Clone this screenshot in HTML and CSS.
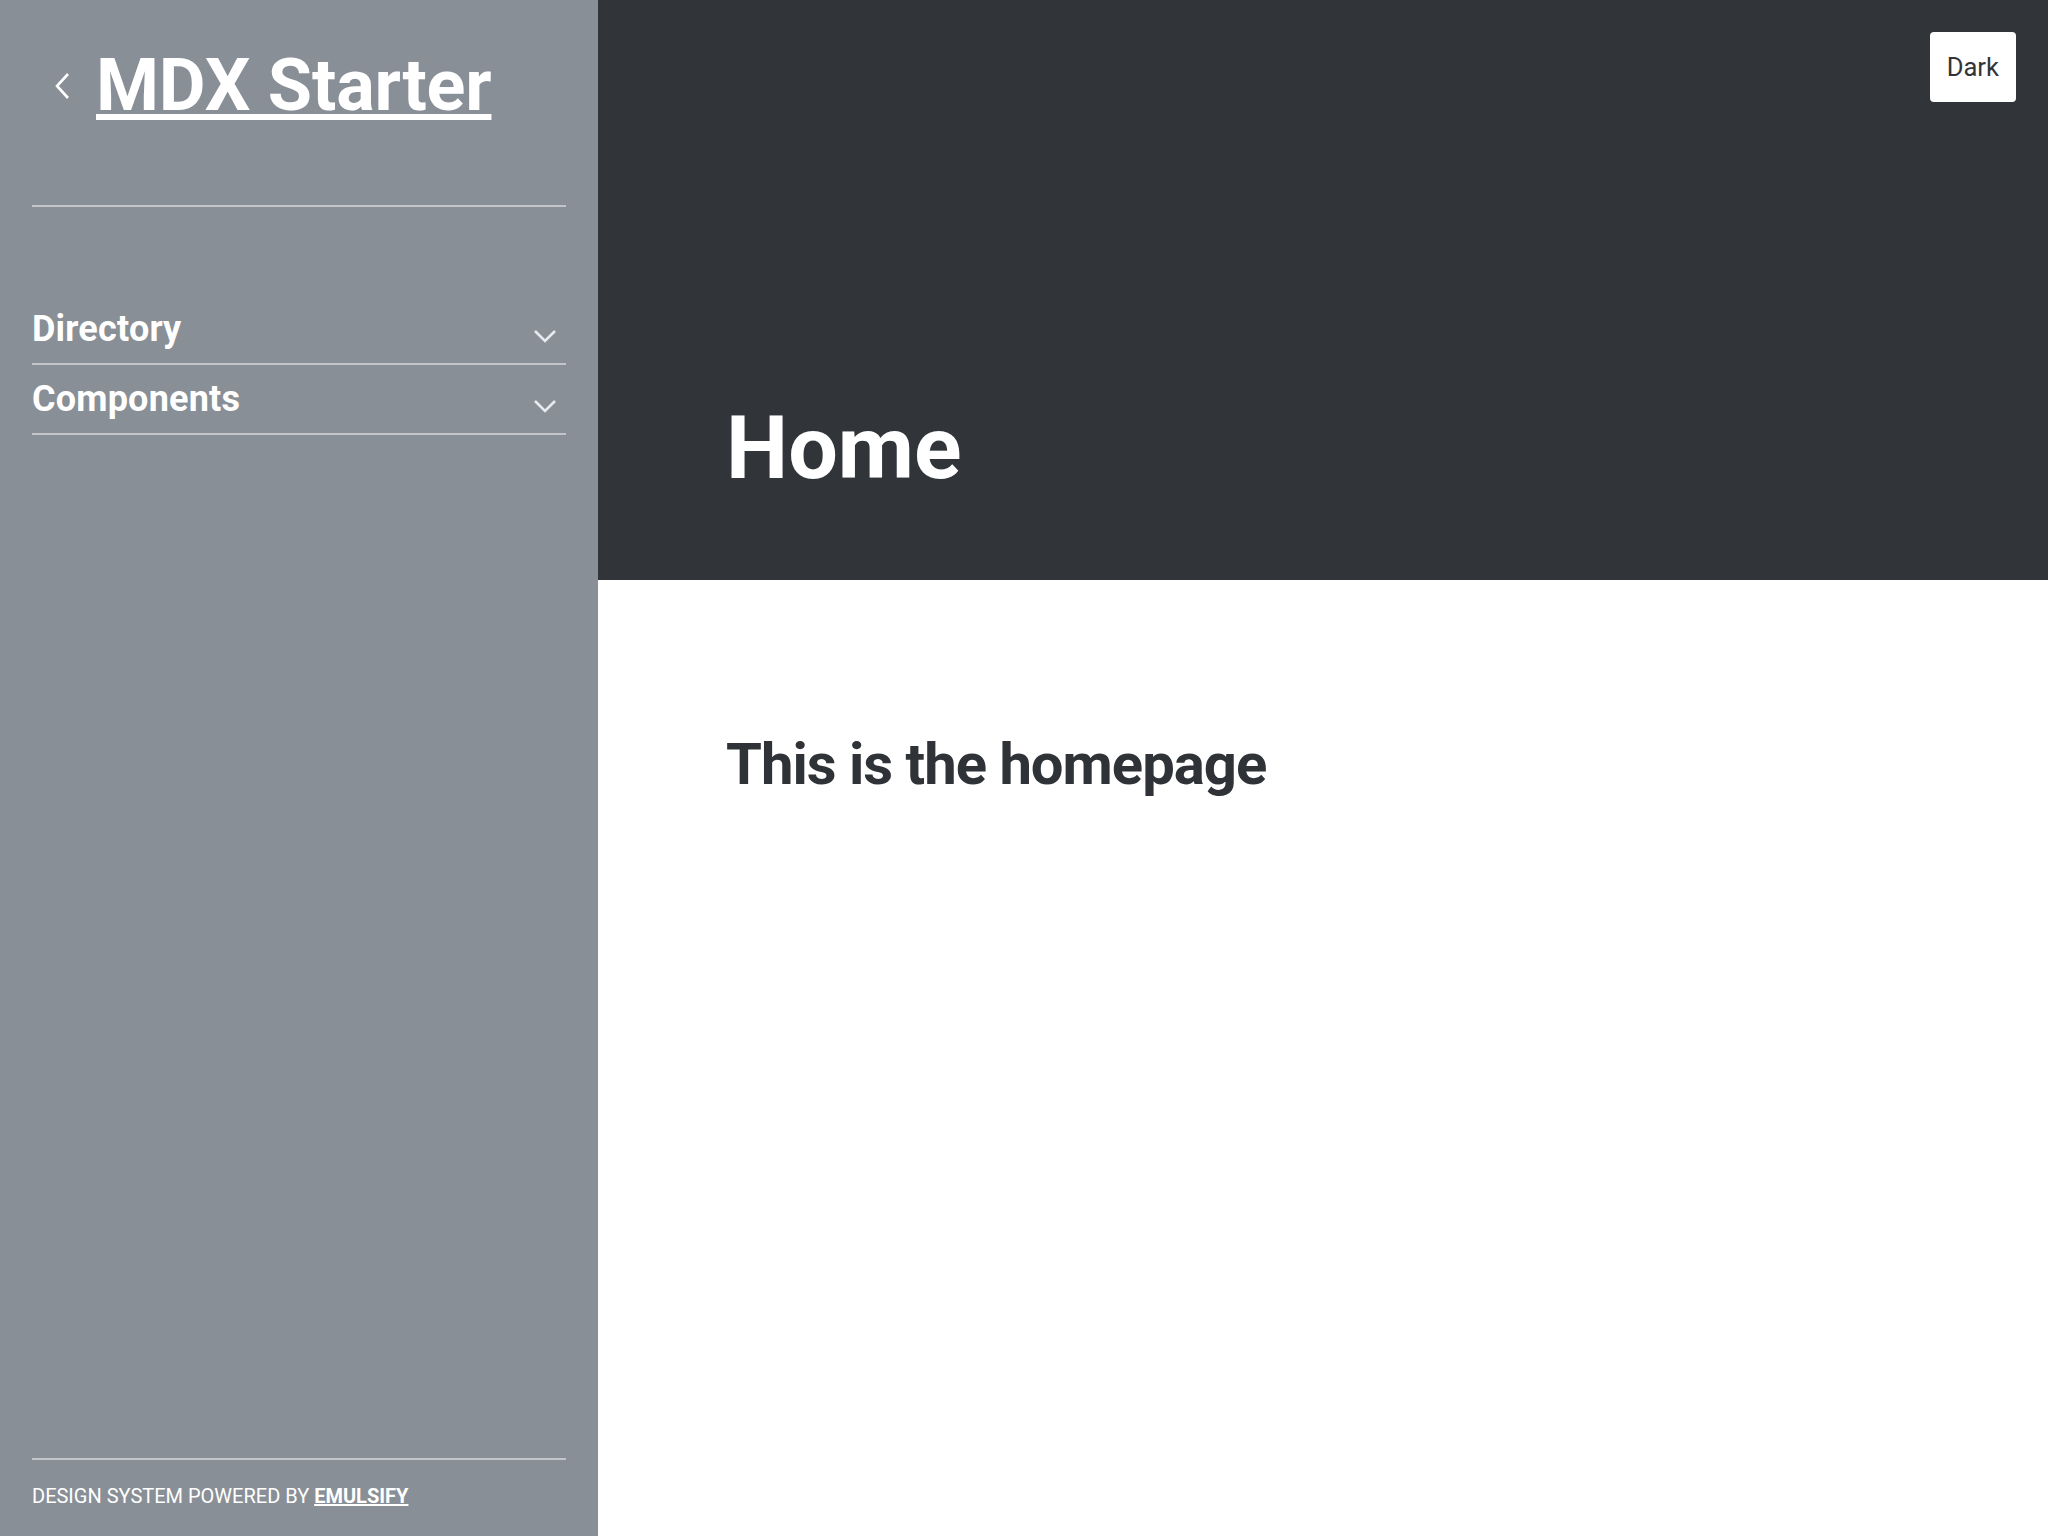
FILE: index.html
```html
<!DOCTYPE html>
<html lang="en">
<head>
<meta charset="utf-8">
<title>MDX Starter</title>
<link rel="stylesheet" href="styles.css">
</head>
<body>
<div class="app">
  <aside class="sidebar">
    <div class="brand">
      <svg class="back" width="18" height="28" viewBox="0 0 18 28"><path d="M14 2 L3 14 L14 26" fill="none" stroke="#fff" stroke-width="2.6"/></svg>
      <a class="brand-link" href="#">MDX Starter</a>
    </div>
    <nav class="nav">
      <div class="nav-item"><span>Directory</span><svg class="chev" width="24" height="14" viewBox="0 0 24 14"><path d="M2 2 L12 12 L22 2" fill="none" stroke="#e6ebf0" stroke-width="2.6"/></svg></div>
      <div class="nav-item"><span>Components</span><svg class="chev" width="24" height="14" viewBox="0 0 24 14"><path d="M2 2 L12 12 L22 2" fill="none" stroke="#e6ebf0" stroke-width="2.6"/></svg></div>
    </nav>
    <footer class="footer">DESIGN SYSTEM POWERED BY <a href="#">EMULSIFY</a></footer>
  </aside>
  <main class="main">
    <header class="hero">
      <button class="mode">Dark</button>
      <h1 class="hero-title">Home</h1>
    </header>
    <section class="content">
      <h2 class="lead">This is the homepage</h2>
    </section>
  </main>
</div>
</body>
</html>
```

FILE: styles.css
```css
* { box-sizing: border-box; }
html, body { margin: 0; padding: 0; height: 100%; }
body { font-family: Roboto, "Liberation Sans", sans-serif; background: #fff; }

.app { display: flex; height: 1536px; }

.sidebar {
  width: 598px;
  flex: none;
  background: #898f96;
  padding: 0 32px;
  display: flex;
  flex-direction: column;
  color: #fff;
}

.brand {
  display: flex;
  align-items: center;
  gap: 24px;
  padding: 44px 0 77px 22px;
  border-bottom: 2px solid #c2c6ca;
}
.back { flex: none; margin-top: 0; }
.brand-link {
  color: #fff;
  font-size: 72px;
  font-weight: 700;
  line-height: 84px;
  letter-spacing: -0.2px;
  text-decoration: underline;
  text-decoration-thickness: 6px;
  text-underline-offset: 4px;
}

.nav { margin-top: 88px; }
.nav-item {
  display: flex;
  justify-content: space-between;
  align-items: center;
  font-size: 36px;
  font-weight: 700;
  line-height: 42px;
  letter-spacing: 0.2px;
  padding: 13px 9px 13px 0;
  border-bottom: 2px solid #c2c6ca;
}
.chev { margin-top: 14px; }

.footer {
  margin-top: auto;
  border-top: 2px solid #c2c6ca;
  padding: 24px 0 28px;
  font-size: 20px;
  line-height: 24px;
}
.footer a { color: #fff; font-weight: 700; text-decoration: underline; text-decoration-thickness: 2px; }

.main { flex: 1; display: flex; flex-direction: column; }
.hero {
  height: 580px;
  background: #313539;
  position: relative;
  padding: 0 0 0 128px;
  display: flex;
  align-items: flex-start;
}
.mode {
  position: absolute;
  top: 32px;
  right: 32px;
  background: #fff;
  color: #313539;
  border: none;
  border-radius: 4px;
  font-family: Roboto, "Liberation Sans", sans-serif;
  font-size: 25.6px;
  line-height: 30px;
  padding: 20px 17px;
}
.hero-title {
  margin: 0;
  margin-top: 396px;
  color: #fff;
  font-size: 88px;
  font-weight: 700;
  line-height: 104px;
}
.content { padding: 0 0 0 128px; }
.lead {
  margin: 150px 0 0;
  color: #2f3236;
  font-size: 58px;
  font-weight: 700;
  line-height: 68px;
  letter-spacing: -1px;
}
```
